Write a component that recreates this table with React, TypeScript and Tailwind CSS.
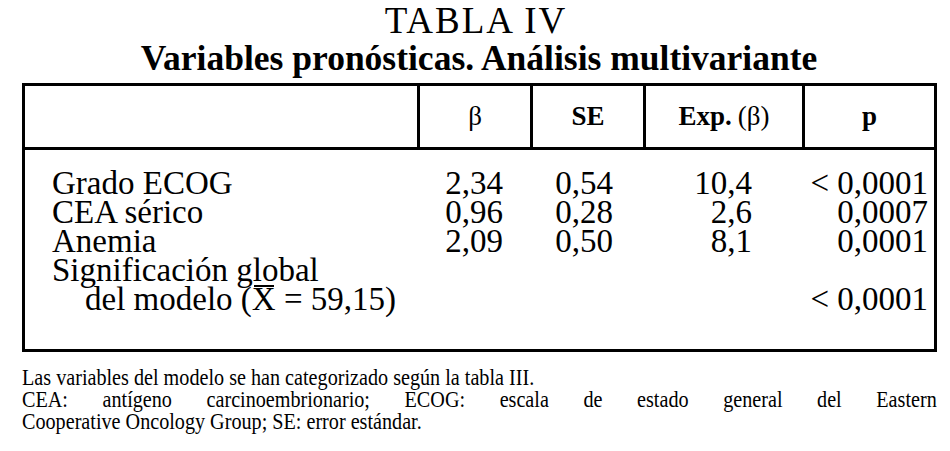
const rows = [
  { label: 'Grado ECOG', b: '2,34', se: '0,54', exp: '10,4', p: '< 0,0001' },
  { label: 'CEA sérico', b: '0,96', se: '0,28', exp: '2,6', p: '0,0007' },
  { label: 'Anemia', b: '2,09', se: '0,50', exp: '8,1', p: '0,0001' },
]

const cols = 'grid grid-cols-[392px_113px_113px_159px_132px]'

export default function App() {
  return (
    <div className="w-[950px] h-[451px] bg-white text-black font-['Liberation_Serif',serif] overflow-hidden">
      <div className="text-center text-[37px] leading-[38px] pt-[2px] tracking-[2px] pl-[2px]">TABLA IV</div>
      <div className="text-center text-[35.5px] leading-[36px] font-bold pl-[8px]">
        Variables pronósticas. Análisis multivariante
      </div>

      <div className="ml-[22px] mt-[7px] w-[915px] border-[3px] border-black">
        {/* header */}
        <div className={`${cols} h-[64px] border-b-[3px] border-black text-[27px] font-bold`}>
          <div />
          <div className="border-l-[3px] border-black flex items-center justify-center font-normal">β</div>
          <div className="border-l-[3px] border-black flex items-center justify-center">SE</div>
          <div className="border-l-[3px] border-black flex items-center justify-center">
            Exp. <span className="font-normal ml-[6px]">(β)</span>
          </div>
          <div className="border-l-[3px] border-black flex items-center justify-center">p</div>
        </div>

        {/* body */}
        <div className="pt-[19px] pb-[35px] text-[33px] leading-[29px]">
          {rows.map((r) => (
            <div key={r.label} className={cols}>
              <div className="pl-[27px]">{r.label}</div>
              <div className="text-right pr-[27px]">{r.b}</div>
              <div className="text-right pr-[30px]">{r.se}</div>
              <div className="text-right pr-[50px]">{r.exp}</div>
              <div className="text-right pr-[6px]">{r.p}</div>
            </div>
          ))}
          <div className={cols}>
            <div className="pl-[27px] whitespace-nowrap">Significación global</div>
          </div>
          <div className={cols}>
            <div className="pl-[60px] whitespace-nowrap">
              del modelo (
              <span className="relative">
                X<span className="absolute left-[2px] right-[2px] top-[4px] h-[2px] bg-black" />
              </span>
              {' '}= 59,15)
            </div>
            <div />
            <div />
            <div />
            <div className="text-right pr-[6px]">&lt; 0,0001</div>
          </div>
        </div>
      </div>

      <div className="ml-[22px] mt-[14px] text-[24px] leading-[22px]">
        <div className="origin-left scale-x-[0.84] w-[1089px] whitespace-nowrap">
          Las variables del modelo se han categorizado según la tabla III.
        </div>
        <div className="origin-left scale-x-[0.84] w-[1089px] text-justify [text-align-last:justify] whitespace-nowrap">
          CEA: antígeno carcinoembrionario; ECOG: escala de estado general del Eastern
        </div>
        <div className="origin-left scale-x-[0.84] w-[1089px] whitespace-nowrap">
          Cooperative Oncology Group; SE: error estándar.
        </div>
      </div>
    </div>
  )
}
